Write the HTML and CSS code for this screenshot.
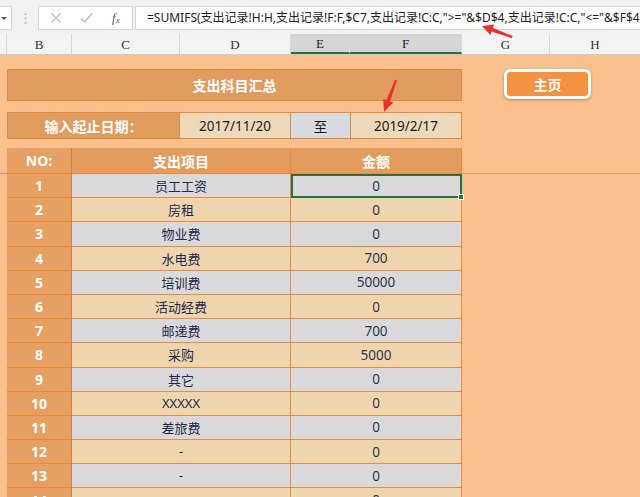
FILE: index.html
```html
<!DOCTYPE html>
<html lang="zh-CN">
<head>
<meta charset="utf-8">
<title>支出科目汇总</title>
<link rel="stylesheet" href="styles.css">
</head>
<body>
<div class="formula-bar">
  <div class="namebox"><span class="caret"></span></div>
  <div class="grip">
    <svg width="3" height="11" viewBox="0 0 3 11"><rect x="0.5" y="0" width="2" height="2" fill="#c4c4c4"/><rect x="0.5" y="4.5" width="2" height="2" fill="#c4c4c4"/><rect x="0.5" y="9" width="2" height="2" fill="#c4c4c4"/></svg>
  </div>
  <div class="fx-box">
    <svg class="ico ico-x" width="12" height="12" viewBox="0 0 12 12"><path d="M1.5 1.5 L10.5 10.5 M10.5 1.5 L1.5 10.5" stroke="#bdbdbd" stroke-width="1.3" fill="none"/></svg>
    <svg class="ico ico-ok" width="13" height="12" viewBox="0 0 13 12"><path d="M1 6.5 L4.5 10 L12 1.5" stroke="#bdbdbd" stroke-width="1.5" fill="none"/></svg>
    <span class="fx">f<sub>x</sub></span>
  </div>
  <div class="formula">=SUMIFS(支出记录!H:H,支出记录!F:F,$C7,支出记录!C:C,"&gt;="&amp;$D$4,支出记录!C:C,"&lt;="&amp;$F$4)</div>
</div>

<div class="col-headers">
  <div class="ch w-a"></div>
  <div class="ch w-b">B</div>
  <div class="ch w-c">C</div>
  <div class="ch w-d">D</div>
  <div class="ch w-e active">E</div>
  <div class="ch w-f active">F</div>
  <div class="ch w-g">G</div>
  <div class="ch w-h">H</div>
</div>

<div class="sheet">
  <div class="spacer"></div>

  <div class="title">支出科目汇总</div>
  <div class="btn-cell"><div class="home-btn">主页</div></div>

  <div class="spacer"></div>

  <div class="label">输入起止日期：</div>
  <div class="date d1">2017/11/20</div>
  <div class="to">至</div>
  <div class="date d2">2019/2/17</div>

  <div class="spacer"></div>

  <div class="freeze-a"></div>
  <div class="hd no">NO:</div>
  <div class="hd item">支出项目</div>
  <div class="hd amount">金额</div>
  <div class="freeze-r"></div>

  <div class="no">1</div><div class="item odd">员工工资</div><div class="amount odd sel">0</div>
  <div class="no">2</div><div class="item even">房租</div><div class="amount even">0</div>
  <div class="no">3</div><div class="item odd">物业费</div><div class="amount odd">0</div>
  <div class="no">4</div><div class="item even">水电费</div><div class="amount even">700</div>
  <div class="no">5</div><div class="item odd">培训费</div><div class="amount odd">50000</div>
  <div class="no">6</div><div class="item even">活动经费</div><div class="amount even">0</div>
  <div class="no">7</div><div class="item odd">邮递费</div><div class="amount odd">700</div>
  <div class="no">8</div><div class="item even">采购</div><div class="amount even">5000</div>
  <div class="no">9</div><div class="item odd">其它</div><div class="amount odd">0</div>
  <div class="no">10</div><div class="item even">XXXXX</div><div class="amount even">0</div>
  <div class="no">11</div><div class="item odd">差旅费</div><div class="amount odd">0</div>
  <div class="no">12</div><div class="item even dash">-</div><div class="amount even">0</div>
  <div class="no">13</div><div class="item odd dash">-</div><div class="amount odd">0</div>
  <div class="no">14</div><div class="item even"></div><div class="amount even">0</div>
</div>

<svg class="annot" width="640" height="497" viewBox="0 0 640 497">
  <polygon points="482,26 494.2,24.6 493,28 512.6,36 511.8,38.2 491.6,31.6 490.4,35" fill="#e8302c"/>
  <polygon points="384,112 393.2,102.6 390,101.4 397,80.4 395.2,79.6 386.4,100.2 383.2,99" fill="#e8302c"/>
</svg>
</body>
</html>
```

FILE: styles.css
```css
html, body {
  margin: 0;
  padding: 0;
}
body {
  width: 640px;
  height: 497px;
  overflow: hidden;
  position: relative;
  background: #f9c08e;
  font-family: "Noto Sans", "Noto Sans CJK SC", sans-serif;
}

/* ---------- formula bar ---------- */
.formula-bar {
  height: 34px;
  box-sizing: border-box;
  padding-top: 6px;
  background: #f1f1f1;
  display: flex;
  align-items: flex-start;
}
.namebox {
  width: 12px;
  height: 24px;
  box-sizing: border-box;
  background: #fff;
  border: 1px solid #d6d6d6;
  border-left: none;
  display: flex;
  align-items: center;
  justify-content: center;
}
.caret {
  width: 0;
  height: 0;
  border-left: 3px solid transparent;
  border-right: 3px solid transparent;
  border-top: 3px solid #555;
  margin-left: -4px;
}
.grip {
  width: 26px;
  height: 24px;
  display: flex;
  align-items: center;
  justify-content: center;
}
.fx-box {
  width: 95px;
  height: 24px;
  box-sizing: border-box;
  background: #fff;
  border: 1px solid #d6d6d6;
  display: flex;
  align-items: center;
}
.ico-x { margin-left: 11px; }
.ico-ok { margin-left: 18px; }
.fx {
  margin-left: 19px;
  font-family: "Liberation Serif", serif;
  font-style: italic;
  font-size: 13px;
  color: #555;
  line-height: 1;
}
.fx sub {
  font-size: 9px;
  vertical-align: -1px;
}
.formula {
  flex: 1;
  margin-left: 2px;
  height: 24px;
  box-sizing: border-box;
  background: #fff;
  border: 1px solid #d6d6d6;
  border-right: none;
  padding-left: 11px;
  font-size: 12px;
  line-height: 22px;
  color: #222;
  white-space: nowrap;
  overflow: hidden;
}

/* ---------- column headers ---------- */
.col-headers {
  display: flex;
  height: 21px;
  box-sizing: border-box;
  background: #f3f3f3;
  border-bottom: 1px solid #cbcbcb;
  font-family: "Liberation Serif", serif;
  font-size: 13px;
  color: #333;
}
.ch {
  box-sizing: border-box;
  border-right: 1px solid #d9d9d9;
  display: flex;
  align-items: center;
  justify-content: center;
  padding-top: 2px;
}
.ch.active {
  background: #d5d5d5;
  border-bottom: 2px solid #217346;
  color: #222;
}
.w-a { width: 7px; }
.w-b { width: 65px; }
.w-c { width: 108px; }
.w-d { width: 111px; }
.w-e { width: 59px; }
.w-f { width: 112px; }
.w-g { width: 88px; }
.w-h { width: 90px; border-right: none; }

/* ---------- sheet ---------- */
.sheet {
  display: grid;
  grid-template-columns: 7px 65px 108px 111px 59px 112px 88px 90px;
  grid-template-rows: 14px 32px 11px 27px 9px 26px repeat(14, 24.2px);
}
.sheet > div {
  box-sizing: border-box;
  display: flex;
  align-items: center;
  justify-content: center;
}
.spacer { grid-column: 1 / -1; }

.title {
  grid-column: 2 / 7;
  background: #e09b5e;
  border: 1px solid #e5883a;
  color: #fff;
  font-weight: 700;
  font-size: 14px;
}
.btn-cell {
  grid-column: 7 / 9;
}
.sheet > .btn-cell {
  justify-content: flex-start;
  align-items: flex-start;
}
.home-btn {
  margin-left: 42px;
  width: 87px;
  height: 30px;
  box-sizing: border-box;
  background: #f39242;
  border: 3px solid #fff;
  border-radius: 6px;
  box-shadow: 0 1px 3px rgba(120, 60, 10, 0.45);
  color: #fff;
  font-weight: 700;
  font-size: 14px;
  display: flex;
  align-items: center;
  justify-content: center;
}

.label {
  grid-column: 2 / 4;
  background: #e09b5e;
  border: 1px solid #e5883a;
  color: #fff;
  font-weight: 700;
  font-size: 14px;
}
.date {
  background: #edd9b9;
  border: 1px solid #e5883a;
  color: #1a1a1a;
  font-size: 13.5px;
}
.d1 { grid-column: 4; border-left: none; }
.d2 { grid-column: 6; }
.to {
  grid-column: 5;
  background: #d8dae0;
  border-top: 1px solid #e5883a;
  border-bottom: 1px solid #e5883a;
  color: #1a1a1a;
  font-size: 13.5px;
}

.freeze-a {
  grid-column: 1;
  border-bottom: 1px solid #b49a86;
}
.freeze-r {
  grid-column: 7 / 9;
  border-bottom: 1px solid #d9a276;
}

.hd {
  background: #e29c5e;
  color: #fff;
  font-weight: 700;
  font-size: 14px;
  border-bottom: 1px solid #e9853a;
  border-right: 1px solid #e9853a;
}

.no {
  grid-column: 2;
  background: #e7a063;
  color: #fff;
  font-weight: 700;
  font-size: 14px;
  border-bottom: 1px solid #f0852e;
  border-right: 1px solid #e27d2c;
}
.item {
  grid-column: 3 / 5;
  color: #1f2b4d;
  font-size: 13px;
  border-bottom: 1px solid #f0893a;
  border-right: 1px solid #f0893a;
}
.amount {
  grid-column: 5 / 7;
  color: #2b3550;
  font-size: 13.5px;
  border-bottom: 1px solid #f0893a;
  border-right: 1px solid #f0893a;
}
.hd.no { grid-column: 2; }
.hd.item, .hd.amount { color: #fff; font-size: 14px; }
.odd { background: #d9d9db; }
.even { background: #eed5ae; }
.dash { color: #111; font-size: 12px; }

.amount.sel {
  position: relative;
  outline: 2px solid #217346;
  outline-offset: -2px;
}
.amount.sel::after {
  content: "";
  position: absolute;
  right: -3px;
  bottom: -3px;
  width: 4px;
  height: 4px;
  background: #217346;
  border: 1px solid #fff;
}

/* ---------- annotations ---------- */
.annot {
  position: absolute;
  left: 0;
  top: 0;
  pointer-events: none;
}
```
